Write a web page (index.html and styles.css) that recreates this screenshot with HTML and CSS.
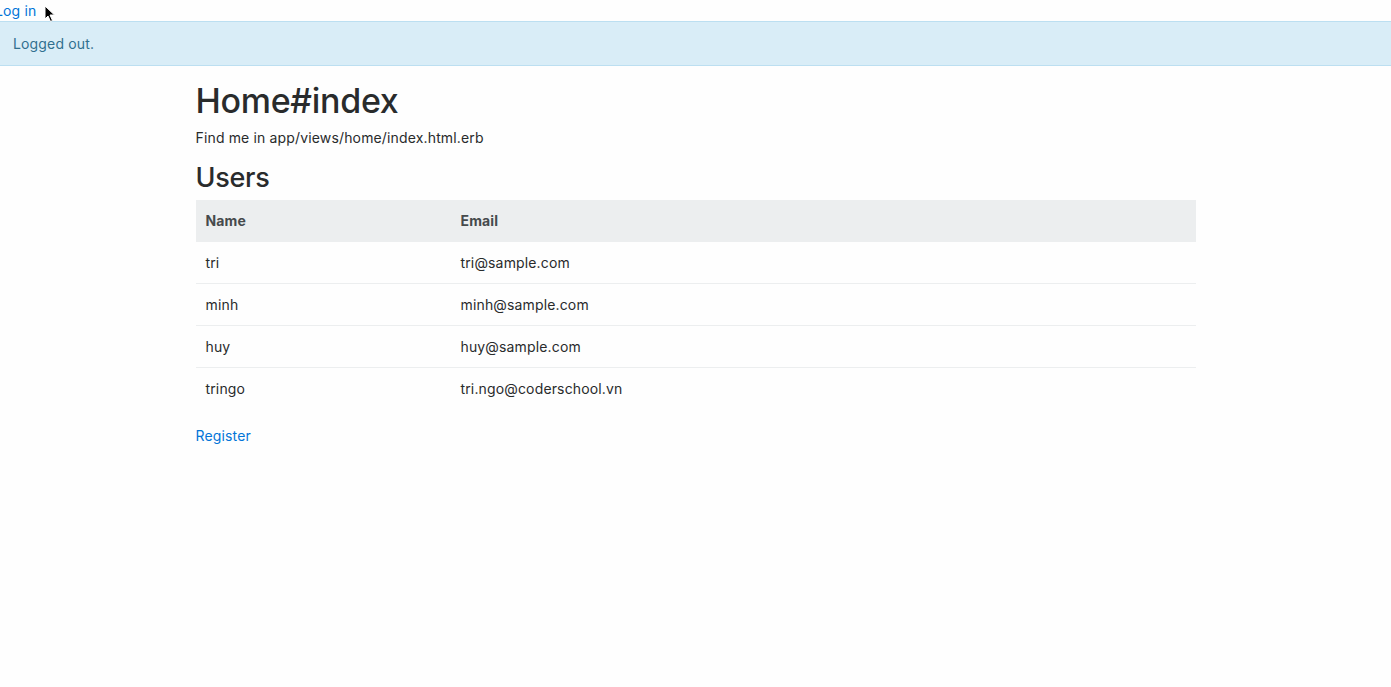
FILE: index.html
```html
<!DOCTYPE html>
<html>
<head>
<meta charset="utf-8">
<title>Home</title>
<link rel="stylesheet" href="styles.css">
</head>
<body>
<a class="login" href="#">Log in</a>
<div class="alert">Logged out.</div>
<div class="container">
  <h1>Home#index</h1>
  <p>Find me in app/views/home/index.html.erb</p>
  <h2>Users</h2>
  <table class="table">
    <thead>
      <tr><th class="col-name">Name</th><th>Email</th></tr>
    </thead>
    <tbody>
      <tr><td>tri</td><td>tri@sample.com</td></tr>
      <tr><td>minh</td><td>minh@sample.com</td></tr>
      <tr><td>huy</td><td>huy@sample.com</td></tr>
      <tr><td>tringo</td><td>tri.ngo@coderschool.vn</td></tr>
    </tbody>
  </table>
  <a class="link" href="#">Register</a>
</div>
<svg class="cursor" width="12" height="18" viewBox="0 0 12 18"><path d="M1 1 L1 14 L4 11 L6.5 16.5 L8.5 15.5 L6 10 L10.5 10 Z" fill="#000" stroke="#fff" stroke-width="1"/></svg>
</body>
</html>
```
FILE: styles.css
```css
html { font-size: 14px; }
body {
  margin: 0;
  background: #fefefe;
  color: #292b2c;
  font-family: Inter, "Noto Sans", sans-serif;
  font-size: 14px;
  line-height: 1.5;
  letter-spacing: 0.15px;
  overflow: hidden;
}
a { color: #0275d8; text-decoration: none; }
.login { display: block; line-height: 21px; margin-left: -5px; }
.alert {
  background: #d9edf7;
  border-top: 1px solid #bcdff1;
  border-bottom: 1px solid #bcdff1;
  color: #31708f;
  padding: 11px 17.5px 11px 13px;
  margin-bottom: 16px;
}
.container {
  width: 1000px;
  margin: 0 auto;
}
h1, h2 { font-weight: 500; line-height: 1.1; margin: 0 0 8px; color: #292b2c; letter-spacing: -0.3px; }
h1 { font-size: 34px; }
h2 { font-size: 27px; margin-bottom: 7px; }
p { margin: 0 0 15px; }
.table { width: 100%; border-collapse: collapse; margin-bottom: 16px; }
.table th, .table td { padding: 10px 10px; line-height: 21px; text-align: left; vertical-align: top; border-top: 1px solid #eceeef; }
.table thead th { background: #eceeef; color: #464a4c; font-weight: 700; border-top: 0; }
.col-name { width: 235px; }
.link { display: inline-block; }
.cursor { position: absolute; left: 44px; top: 5px; }
```
